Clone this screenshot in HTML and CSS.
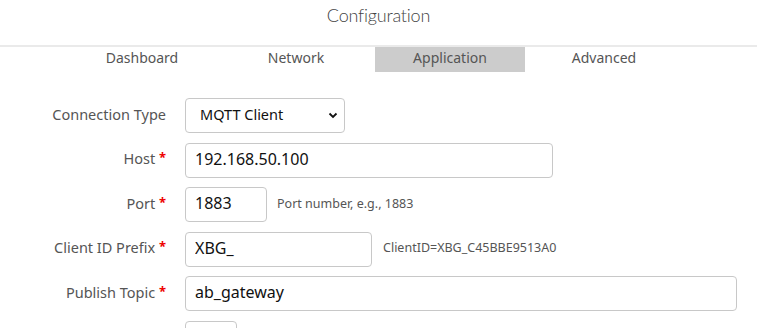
FILE: index.html
```html
<!DOCTYPE html>
<html>
<head>
    <meta charset="UTF-8">
    <title>Configuration</title>
    <link rel="stylesheet" href="styles.css">
</head>
<body>
    <div class="page">
        <h1 class="title">Configuration</h1>

        <nav class="tabs">
            <a class="tab">Dashboard</a>
            <a class="tab">Network</a>
            <a class="tab active">Application</a>
            <a class="tab">Advanced</a>
        </nav>

        <form class="config-form">
            <div class="row">
                <label class="label">Connection Type</label>
                <div class="select-wrap">
                    <select class="field select">
                        <option>MQTT Client</option>
                        <option>TCP Server</option>
                        <option>HTTP Client</option>
                    </select>
                    <svg class="chevron" width="10" height="7" viewBox="0 0 10 7">
                        <path d="M1.5 1.5 L5 5 L8.5 1.5" fill="none" stroke="#111" stroke-width="1.8"/>
                    </svg>
                </div>
            </div>

            <div class="row">
                <label class="label">Host <span class="req">*</span></label>
                <input class="field host" type="text" value="192.168.50.100">
            </div>

            <div class="row">
                <label class="label">Port <span class="req">*</span></label>
                <input class="field port" type="text" value="1883">
                <span class="hint hint-port">Port number, e.g., 1883</span>
            </div>

            <div class="row">
                <label class="label">Client ID Prefix <span class="req">*</span></label>
                <input class="field client" type="text" value="XBG_">
                <span class="hint hint-client">ClientID=XBG_C45BBE9513A0</span>
            </div>

            <div class="row">
                <label class="label">Publish Topic <span class="req">*</span></label>
                <input class="field topic" type="text" value="ab_gateway">
            </div>

            <div class="row">
                <label class="label"></label>
                <input class="field qos" type="text">
            </div>
        </form>
    </div>
</body>
</html>
```

FILE: styles.css
```css
html, body {
    margin: 0;
    padding: 0;
    background: #fff;
    overflow: hidden;
}

body {
    font-family: 'Noto Sans', 'Noto Sans CJK KR', sans-serif;
    color: #555;
}

.page {
    width: 757px;
}

.title {
    margin: 0;
    height: 45px;
    line-height: 31px;
    text-align: center;
    font-family: 'Lato', 'Liberation Sans', sans-serif;
    font-weight: 300;
    font-size: 18px;
    letter-spacing: -0.2px;
    color: #444;
    border-bottom: 2px solid #eaeaea;
}

.tabs {
    display: flex;
    gap: 4px;
    padding-left: 67px;
}

.tab {
    width: 150px;
    height: 25px;
    line-height: 22px;
    text-align: center;
    font-size: 14px;
    color: #555;
    cursor: pointer;
}

.tab.active {
    background-color: #ccc;
}

.config-form {
    margin-top: 26px;
    display: flex;
    flex-direction: column;
    gap: 9.5px;
}

.row {
    display: flex;
    align-items: center;
    height: 35px;
}

.label {
    width: 166px;
    margin-right: 19px;
    padding-bottom: 4px;
    text-align: right;
    font-size: 14.5px;
    color: #555;
}

.req {
    color: #e00;
    font-weight: bold;
    font-size: 13px;
    vertical-align: 2px;
}

.field {
    box-sizing: border-box;
    height: 35px;
    border: 1px solid #c8c8c8;
    border-radius: 4px;
    padding: 0 9px 3px;
    font-family: 'Noto Sans', 'Noto Sans CJK KR', sans-serif;
    font-size: 16px;
    color: #111;
    background: #fff;
    outline: none;
}

.select-wrap {
    position: relative;
}

.select {
    width: 160px;
    appearance: none;
    -webkit-appearance: none;
    padding-left: 14px;
    font-size: 14.5px;
}

.chevron {
    position: absolute;
    right: 7px;
    top: 14px;
    pointer-events: none;
}

.host { width: 368px; }
.port { width: 82px; }
.client { width: 187px; }
.topic { width: 552px; }
.qos { width: 52px; }

.hint {
    font-size: 12.5px;
    color: #555;
    padding-bottom: 3px;
}

.hint-port { margin-left: 10px; }
.hint-client { margin-left: 11px; }
```
